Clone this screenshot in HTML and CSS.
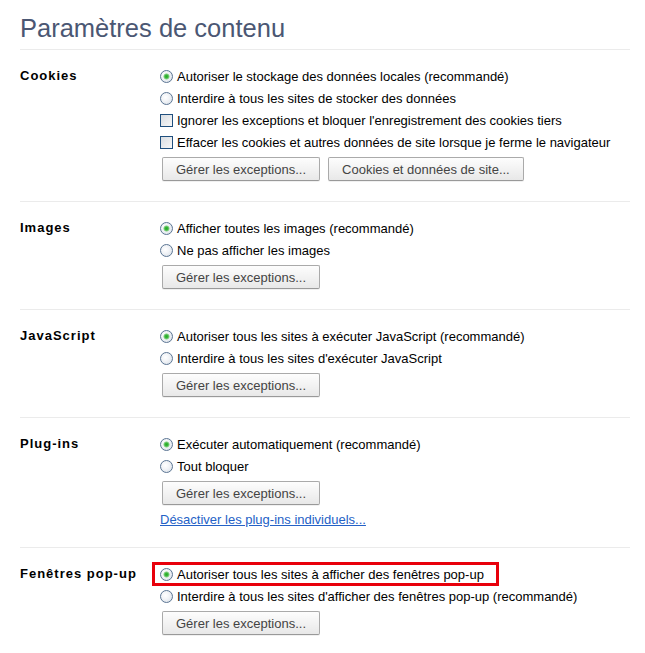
FILE: index.html
```html
<!DOCTYPE html>
<html lang="fr">
<head>
  <meta charset="UTF-8" />
  <title>Paramètres de contenu</title>
  <link rel="stylesheet" href="styles.css">
</head>
<body>

<div class="page">
  <h1 class="title">Paramètres de contenu</h1>

  <section class="section">
    <h3 class="section-name">Cookies</h3>
    <div class="section-body">
      <label class="row"><input type="radio" name="cookies" checked> Autoriser le stockage des données locales (recommandé)</label>
      <label class="row"><input type="radio" name="cookies"> Interdire à tous les sites de stocker des données</label>
      <label class="row"><input type="checkbox"> Ignorer les exceptions et bloquer l'enregistrement des cookies tiers</label>
      <label class="row"><input type="checkbox"> Effacer les cookies et autres données de site lorsque je ferme le navigateur</label>
      <div class="actions">
        <button>Gérer les exceptions...</button>
        <button>Cookies et données de site...</button>
      </div>
    </div>
  </section>

  <section class="section">
    <h3 class="section-name">Images</h3>
    <div class="section-body">
      <label class="row"><input type="radio" name="images" checked> Afficher toutes les images (recommandé)</label>
      <label class="row"><input type="radio" name="images"> Ne pas afficher les images</label>
      <div class="actions">
        <button>Gérer les exceptions...</button>
      </div>
    </div>
  </section>

  <section class="section">
    <h3 class="section-name">JavaScript</h3>
    <div class="section-body">
      <label class="row"><input type="radio" name="js" checked> Autoriser tous les sites à exécuter JavaScript (recommandé)</label>
      <label class="row"><input type="radio" name="js"> Interdire à tous les sites d'exécuter JavaScript</label>
      <div class="actions">
        <button>Gérer les exceptions...</button>
      </div>
    </div>
  </section>

  <section class="section">
    <h3 class="section-name">Plug-ins</h3>
    <div class="section-body">
      <label class="row"><input type="radio" name="plugins" checked> Exécuter automatiquement (recommandé)</label>
      <label class="row"><input type="radio" name="plugins"> Tout bloquer</label>
      <div class="actions">
        <button>Gérer les exceptions...</button>
      </div>
      <a class="link" href="#">Désactiver les plug-ins individuels...</a>
    </div>
  </section>

  <section class="section">
    <h3 class="section-name">Fenêtres pop-up</h3>
    <div class="section-body">
      <label class="row highlight"><input type="radio" name="popups" checked> Autoriser tous les sites à afficher des fenêtres pop-up</label>
      <label class="row"><input type="radio" name="popups"> Interdire à tous les sites d'afficher des fenêtres pop-up (recommandé)</label>
      <div class="actions">
        <button>Gérer les exceptions...</button>
      </div>
    </div>
  </section>
</div>

</body>
</html>
```

FILE: styles.css
```css
body {
  margin: 0;
  background: #fff;
  color: #000;
  font-family: 'Liberation Sans', Arial, sans-serif;
  font-size: 13px;
}
.page {
  width: 610px;
  margin-left: 20px;
}
.title {
  margin: 0;
  padding: 13px 0 6px;
  font-size: 25.5px;
  line-height: 30px;
  font-weight: normal;
  color: #4b5773;
}
.section {
  display: grid;
  grid-template-columns: 140px 1fr;
  border-top: 1px solid #ebebeb;
  padding: 15px 0 16px;
}
.section-name {
  margin: 0;
  font-size: 13px;
  line-height: 22px;
  font-weight: bold;
  letter-spacing: 1px;
}
.row {
  display: flex;
  align-items: center;
  gap: 4px;
  height: 22px;
  white-space: nowrap;
}
.row input {
  appearance: none;
  margin: 0;
  width: 13px;
  height: 13px;
  flex: none;
  box-sizing: border-box;
}
input[type="radio"] {
  border: 1px solid #5b7593;
  border-radius: 50%;
  background: radial-gradient(circle at 40% 40%, #fff 0, #f2f4f7 40%, #d4dce5 100%);
}
input[type="radio"]:checked {
  background:
    radial-gradient(circle, #27a827 0, #3cb83c 1.6px, #9fd89f 2.8px, rgba(255,255,255,0) 3.4px),
    radial-gradient(circle at 40% 40%, #fff 0, #f2f4f7 40%, #d4dce5 100%);
}
input[type="checkbox"] {
  border: 1px solid #1f4f7e;
  background: linear-gradient(135deg, #d9dde2, #f7f7f7);
}
.highlight {
  position: relative;
}
.highlight::after {
  content: '';
  position: absolute;
  left: -8px;
  top: -1px;
  width: 347px;
  height: 24px;
  border: 3px solid #e8000b;
  box-sizing: border-box;
}
.actions {
  display: flex;
  gap: 8px;
  margin: 4px 0 4px 2px;
}
button {
  height: 24px;
  padding: 0 13px;
  border: 1px solid #aaa;
  border-bottom-color: #999;
  border-radius: 2px;
  background: linear-gradient(#fdfdfd, #e8e8e8);
  box-shadow: 0 1px 0 rgba(0,0,0,0.06);
  color: #444;
  font-family: 'Liberation Sans', Arial, sans-serif;
  font-size: 13px;
  cursor: pointer;
}
.link {
  display: block;
  margin-top: 1px;
  line-height: 22px;
  color: #2461c6;
  text-decoration: underline;
}
```
